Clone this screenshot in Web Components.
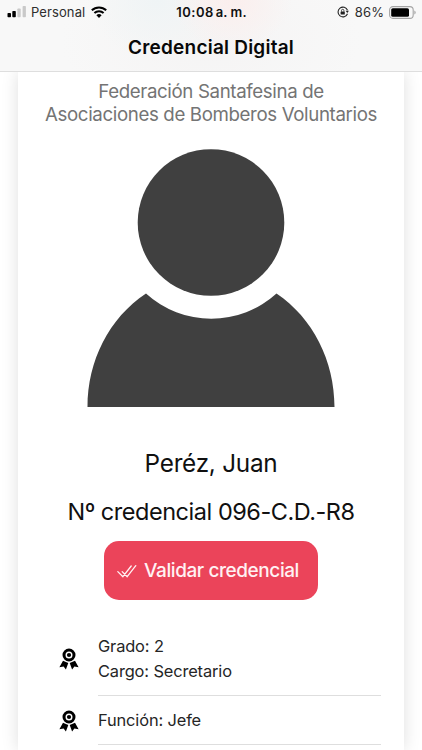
<!DOCTYPE html>
<html lang="es"><head><meta charset="utf-8"><title>Credencial Digital</title>
<style>
html,body{margin:0;height:100%;overflow:hidden;background:#fff}
body{font-family:Inter,"Liberation Sans",sans-serif;color:#101010}
</style></head><body>
<credential-app></credential-app>
<script>
const define=(name,html)=>customElements.define(name,class extends HTMLElement{
  constructor(){super();this.attachShadow({mode:'open'}).innerHTML=html;}
});

define('status-bar',`<style>
:host{display:flex;align-items:center;height:24px;padding:0 6px 0 7px;font-size:13px;line-height:24px;color:#2e2e2e;white-space:nowrap;box-sizing:border-box}
div{display:flex;align-items:center;flex:1 1 0}
.r{justify-content:flex-end}
svg{display:block;flex:none}
.carrier{margin:0 6px 0 5px;letter-spacing:.1px}
.time{font-weight:600;color:#111;letter-spacing:.45px}
.time small{font-size:13px;margin-left:2px;letter-spacing:.1px}
.pct{margin:0 5px 0 6px;letter-spacing:.1px}
</style>
<div><svg width="19" height="12" viewBox="0 0 19 12"><rect x=".5" y="7" width="3.5" height="4.2" rx=".8" fill="#000"/><rect x="5.3" y="5" width="3.5" height="6.2" rx=".8" fill="#000"/><rect x="10.4" y="2.5" width="3.3" height="8.7" rx=".8" fill="#c9c9c9"/><rect x="15.6" y="0" width="3.3" height="11.2" rx=".8" fill="#c9c9c9"/></svg>
<span class="carrier">Personal</span>
<svg width="16" height="12" viewBox="0 0 16 12"><g fill="none" stroke="#000" stroke-width="2"><path d="M.8 4.3a10.4 10.4 0 0 1 14.4 0"/><path d="M3.4 7a6.7 6.7 0 0 1 9.2 0"/></g><path d="M8 12 5.4 9.3a3.8 3.8 0 0 1 5.2 0Z"/></svg></div>
<span class="time">10:08<small>a. m.</small></span>
<div class="r"><svg width="12" height="12" viewBox="0 0 12 12"><path d="M10.5 4.2A4.9 4.9 0 1 0 10.5 7.8" fill="none" stroke="#222" stroke-width="1.1"/><path d="M8.6 4.7h3.3l-1.6 2.2z" fill="#222"/><rect x="3.6" y="5.4" width="4.2" height="3.1" rx=".5" fill="#222"/><path d="M4.5 5.6V4.5a1.2 1.2 0 0 1 2.4 0v1.1" fill="none" stroke="#222" stroke-width=".8"/></svg>
<span class="pct">86%</span>
<svg width="27" height="13" viewBox="0 0 27 13"><rect x=".6" y=".6" width="23.6" height="11.8" rx="3.4" fill="none" stroke="#a5a5a5" stroke-width="1.1"/><rect x="2.2" y="2.2" width="17.8" height="8.6" rx="1.6"/><path d="M25.3 4.5v4q1.4-.5 1.4-2t-1.4-2Z" fill="#aaa"/></svg></div>`);

define('app-header',`<style>
:host{display:block;height:72px;box-sizing:border-box;border-bottom:1px solid #dedede;background:radial-gradient(ellipse 60px 50px at 232px 0,#fbeeed,#fbeeed00),radial-gradient(ellipse 70px 60px at 158px 0,#eff4f5,#eff4f500),radial-gradient(ellipse 150px 90px at 211px 40px,#f5f4f4,#f8f8f800),#f8f8f8}
h1{margin:0;text-align:center;font-size:19px;font-weight:600;line-height:24px;padding-top:12px;color:#080808;letter-spacing:.22px}
</style><slot></slot><h1>Credencial Digital</h1>`);

define('person-avatar',`<style>:host{display:block;height:258px}svg{display:block;margin:auto}</style>
<svg width="248" height="258" viewBox="0 0 248 258" fill="#404040"><circle cx="124" cy="73.5" r="73.3"/><path d="M.5 258C.5 212 22 169 59 144.500A97 97 0 0 0 189.500 144.500C226 169 247.500 212 247.500 258Z"/></svg>`);

define('validate-button',`<style>
:host{display:block}
button{display:flex;align-items:center;gap:7px;width:214px;height:59px;margin:0 auto;border:0;border-radius:15px;background:#eb445a;color:#fff1f3;font:500 19px/24px Inter,"Liberation Sans",sans-serif;padding:1px 0 0 13px;white-space:nowrap;letter-spacing:-.42px}
svg{flex:none}
</style><button><svg width="20" height="14" viewBox="0 0 20 14" fill="none" stroke="#fff1f3" stroke-width="1.3" stroke-linecap="round" stroke-linejoin="round"><path d="M.8 7.600 5.900 12.700 14.200 2M5.200 7.600 10.200 12.700 18.800 1.700"/></svg><slot></slot></button>`);

define('info-row',`<style>
:host{display:grid;grid-template-columns:56px 1fr;align-items:center;padding-left:24px;padding-right:23px}
.icon{padding-left:17px}
svg{display:block}
.body{box-sizing:border-box;border-bottom:1px solid #dedede;font-size:16.4px;line-height:25px;color:#252525;padding:12px 0 11px;white-space:nowrap;letter-spacing:-.13px}
</style><div class="icon"><svg width="20" height="22" viewBox="0 0 20 22"><circle cx="10" cy="7" r="5" fill="none" stroke="#000" stroke-width="3"/><circle cx="10" cy="7" r="2.100"/><path d="M4 12.800 9.300 15 6.900 21.600 4.600 18.600.4 19.300ZM16 12.800 10.700 15 13.100 21.600 15.400 18.600 19.600 19.300Z"/></svg></div>
<div class="body"><slot></slot></div>`);

define('credential-card',`<style>
:host{display:block;box-sizing:border-box;width:386px;height:678px;margin:0 auto;background:#fff;box-shadow:0 0 16px rgba(0,0,0,.13);overflow:hidden}
.org{margin:0;padding-top:8px;text-align:center;font-size:18.7px;line-height:23px;color:#747474;white-space:nowrap;letter-spacing:-.37px}
.org span{display:block}
person-avatar{margin-top:23px}
h2{margin:0;text-align:center;font-size:24.3px;font-weight:400;line-height:30px;color:#101010;white-space:nowrap}
.name{margin-top:41px;letter-spacing:-.25px}
.num{margin-top:19px;font-size:23.5px;letter-spacing:-.47px}
validate-button{margin-top:14px}
.rows{margin-top:22px}
</style>
<p class="org"><span>Federación Santafesina de</span><span>Asociaciones de Bomberos Voluntarios</span></p>
<person-avatar></person-avatar>
<h2 class="name">Peréz, Juan</h2><h2 class="num">Nº credencial 096-C.D.-R8</h2>
<validate-button>Validar credencial</validate-button>
<div class="rows"><info-row>Grado: 2<br>Cargo: Secretario</info-row><info-row>Función: Jefe</info-row></div>`);

define('credential-app',`<style>:host{display:block;width:422px;height:750px;overflow:hidden}app-header{position:relative;z-index:1}</style>
<app-header><status-bar></status-bar></app-header><credential-card></credential-card>`);
</script></body></html>
